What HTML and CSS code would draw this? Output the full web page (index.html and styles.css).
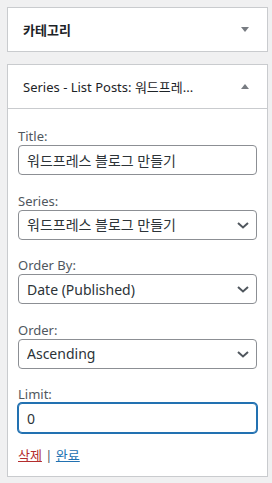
FILE: index.html
```html
<!DOCTYPE html>
<html lang="ko">
<head>
  <meta charset="UTF-8" />
  <meta name="viewport" content="width=device-width, initial-scale=1.0"/>
  <title>위젯</title>
  <link rel="stylesheet" href="styles.css">
</head>
<body>

  <div class="widget">
    <div class="widget-top">
      <h3 class="widget-title bold">카테고리</h3>
      <span class="widget-toggle down"></span>
    </div>
  </div>

  <div class="widget">
    <div class="widget-top">
      <h3 class="widget-title">Series - List Posts: 워드프레...</h3>
      <span class="widget-toggle up"></span>
    </div>

    <form class="widget-inside">
      <div class="field">
        <label for="title">Title:</label>
        <input type="text" id="title" class="widefat" value="워드프레스 블로그 만들기">
      </div>

      <div class="field">
        <label for="series">Series:</label>
        <div class="select-wrap">
          <select id="series" class="widefat">
            <option>워드프레스 블로그 만들기</option>
          </select>
          <svg class="chevron" width="12" height="7" viewBox="0 0 12 7"><path d="M1 1l5 4.5L11 1" fill="none" stroke="#50575e" stroke-width="2"/></svg>
        </div>
      </div>

      <div class="field">
        <label for="orderby">Order By:</label>
        <div class="select-wrap">
          <select id="orderby" class="widefat">
            <option>Date (Published)</option>
          </select>
          <svg class="chevron" width="12" height="7" viewBox="0 0 12 7"><path d="M1 1l5 4.5L11 1" fill="none" stroke="#50575e" stroke-width="2"/></svg>
        </div>
      </div>

      <div class="field">
        <label for="order">Order:</label>
        <div class="select-wrap">
          <select id="order" class="widefat">
            <option>Ascending</option>
          </select>
          <svg class="chevron" width="12" height="7" viewBox="0 0 12 7"><path d="M1 1l5 4.5L11 1" fill="none" stroke="#50575e" stroke-width="2"/></svg>
        </div>
      </div>

      <div class="field">
        <label for="limit">Limit:</label>
        <input type="text" id="limit" class="widefat is-focus" value="0">
      </div>

      <div class="widget-actions">
        <a href="#" class="delete">삭제</a> | <a href="#" class="done">완료</a>
      </div>
    </form>
  </div>

</body>
</html>
```

FILE: styles.css
```css
body {
  font-family: "Noto Sans", "Noto Sans CJK KR", sans-serif;
  margin: 0;
  padding: 7px 4px 0 7px;
  background-color: #f0f0f1;
  color: #1d2327;
  font-size: 13px;
}

.widget {
  background-color: white;
  border: 1px solid #c9cbce;
  margin-bottom: 12px;
}

.widget-top {
  display: flex;
  align-items: center;
  height: 43px;
  padding: 0 15px;
}

.widget-title {
  flex: 1;
  margin: 0;
  font-size: 13px;
  font-weight: normal;
  white-space: nowrap;
}

.widget-title.bold {
  font-weight: bold;
}

.widget-toggle {
  margin-left: auto;
  margin-right: 3px;
  width: 0;
  height: 0;
  border-left: 4px solid transparent;
  border-right: 4px solid transparent;
}

.widget-toggle.down {
  border-top: 5px solid #787c82;
}

.widget-toggle.up {
  border-bottom: 5px solid #787c82;
}

.widget-inside {
  border-top: 1px solid #c9cbce;
  padding: 18px 10px 12px;
}

.field {
  margin-bottom: 16.5px;
}

.field label {
  display: block;
  line-height: 18px;
  color: #50575e;
}

.widefat {
  display: block;
  box-sizing: border-box;
  width: 100%;
  height: 30px;
  margin: 0;
  padding: 0 8px;
  border: 1px solid #8c8f94;
  border-radius: 4px;
  background-color: white;
  color: #2c3338;
  font-family: "Noto Sans", "Noto Sans CJK KR", sans-serif;
  font-size: 14px;
}

.widefat.is-focus {
  border-color: #2271b1;
  box-shadow: 0 0 0 1px #2271b1;
  outline: none;
}

.select-wrap {
  position: relative;
}

.select-wrap select {
  appearance: none;
  -webkit-appearance: none;
  padding-right: 24px;
}

.chevron {
  position: absolute;
  right: 8px;
  top: 12px;
  pointer-events: none;
}

.widget-actions {
  margin-top: -3.5px;
  line-height: 18px;
  color: #50575e;
}

.widget-actions a {
  text-decoration: underline;
}

.widget-actions .delete {
  color: #b32d2e;
}

.widget-actions .done {
  color: #2271b1;
}
```
